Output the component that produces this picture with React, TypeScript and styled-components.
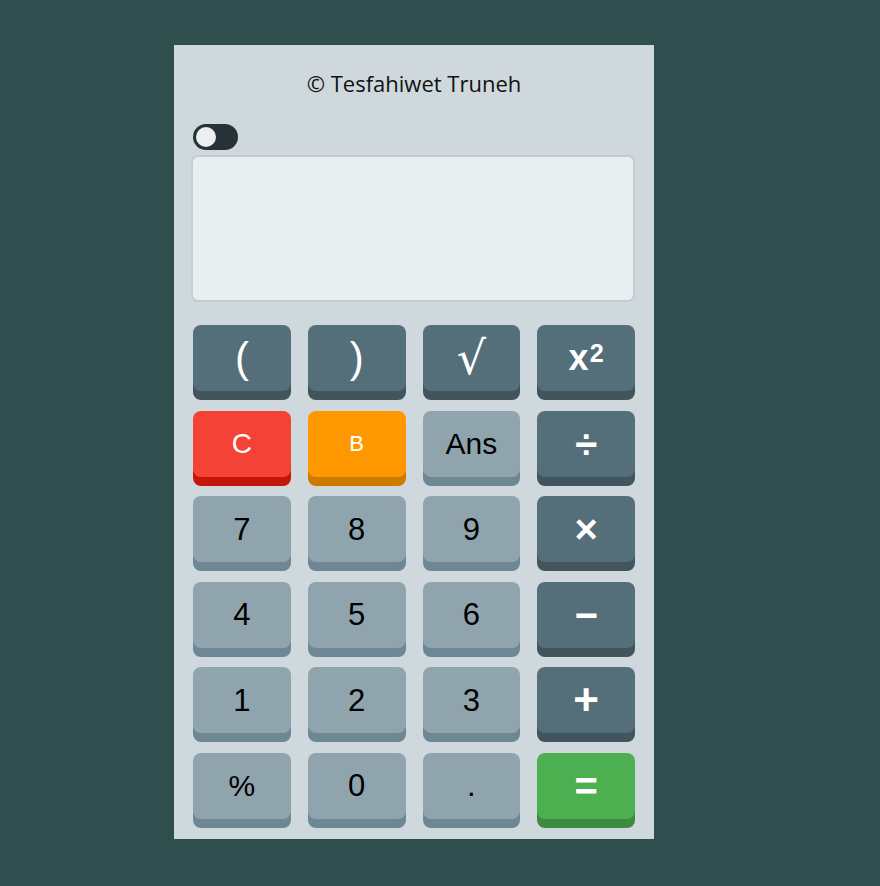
import React from "react";
import styled, { createGlobalStyle } from "styled-components";

const Global = createGlobalStyle`
  html, body { margin: 0; padding: 0; background: #2f4f4f; }
  body { font-family: "Liberation Sans", Arial, sans-serif; }
`;

const Page = styled.div`
  padding: 45px 0 47px 174px;
`;

const Panel = styled.div`
  width: 480px;
  background: #cfd8dc;
  box-sizing: border-box;
  padding: 0 19px 11px 19px;
  display: flex;
  flex-direction: column;
`;

const Title = styled.h1`
  margin: 0;
  height: 79px;
  display: flex;
  align-items: center;
  justify-content: center;
  font-family: "Open Sans", "Noto Sans", sans-serif;
  font-weight: 400;
  font-size: 22px;
  color: #111;
  padding-bottom: 4px;
  box-sizing: border-box;
`;

const Toggle = styled.div`
  width: 45px;
  height: 26px;
  border-radius: 13px;
  background: #263238;
  position: relative;
  margin-bottom: 5px;
`;

const Knob = styled.span`
  position: absolute;
  left: 3px;
  top: 3px;
  width: 20px;
  height: 20px;
  border-radius: 50%;
  background: #eceff1;
`;

const Display = styled.div`
  margin-left: -2px;
  height: 147px;
  box-sizing: border-box;
  border: 2px solid #c3cdd2;
  border-radius: 7px;
  background: #e9eef1;
  margin-bottom: 23px;
`;

const Keys = styled.div`
  display: grid;
  grid-template-columns: repeat(4, 1fr);
  column-gap: 17px;
  row-gap: 19.6px;
  padding-bottom: 9px;
`;

type Variant = "dark" | "light" | "red" | "orange" | "green";

const palette: Record<Variant, { face: string; shade: string; text: string }> = {
  dark: { face: "#546e7a", shade: "#42555d", text: "#ffffff" },
  light: { face: "#90a4ae", shade: "#6d8794", text: "#000000" },
  red: { face: "#f44336", shade: "#c5160b", text: "#ffffff" },
  orange: { face: "#ff9800", shade: "#cc7a00", text: "#ffffff" },
  green: { face: "#4caf50", shade: "#3d8b40", text: "#ffffff" },
};

const Key = styled.button<{ $v: Variant; $size: number; $bold?: boolean; $font?: string }>`
  height: 66px;
  border: none;
  border-radius: 8px;
  padding: 0;
  background: ${(p) => palette[p.$v].face};
  box-shadow: 0 9px 0 ${(p) => palette[p.$v].shade};
  color: ${(p) => palette[p.$v].text};
  font-family: ${(p) => p.$font ?? `"Liberation Sans", Arial, sans-serif`};
  font-size: ${(p) => p.$size}px;
  font-weight: ${(p) => (p.$bold ? 700 : 400)};
  display: flex;
  align-items: center;
  justify-content: center;
  line-height: 1;
  cursor: pointer;
`;

const Sup = styled.sup`
  font-size: 0.7em;
  line-height: 0;
  position: relative;
  top: -0.2em;
  margin-left: 1px;
`;

type K = { label: React.ReactNode; v: Variant; size: number; bold?: boolean; font?: string };

const keys: K[] = [
  { label: "(", v: "dark", size: 42 },
  { label: ")", v: "dark", size: 42 },
  { label: "√", v: "dark", size: 46, font: `"DejaVu Serif", serif` },
  { label: <>x<Sup>2</Sup></>, v: "dark", size: 36, bold: true },
  { label: "C", v: "red", size: 28 },
  { label: "B", v: "orange", size: 22 },
  { label: "Ans", v: "light", size: 30 },
  { label: "÷", v: "dark", size: 40, bold: true },
  { label: "7", v: "light", size: 31 },
  { label: "8", v: "light", size: 31 },
  { label: "9", v: "light", size: 31 },
  { label: "×", v: "dark", size: 40, bold: true },
  { label: "4", v: "light", size: 31 },
  { label: "5", v: "light", size: 31 },
  { label: "6", v: "light", size: 31 },
  { label: "−", v: "dark", size: 40, bold: true },
  { label: "1", v: "light", size: 31 },
  { label: "2", v: "light", size: 31 },
  { label: "3", v: "light", size: 31 },
  { label: "+", v: "dark", size: 44, bold: true },
  { label: "%", v: "light", size: 30 },
  { label: "0", v: "light", size: 31 },
  { label: ".", v: "light", size: 31 },
  { label: "=", v: "green", size: 40, bold: true },
];

export default function App() {
  return (
    <Page>
      <Global />
      <Panel>
        <Title>© Tesfahiwet Truneh</Title>
        <Toggle>
          <Knob />
        </Toggle>
        <Display />
        <Keys>
          {keys.map((k, i) => (
            <Key key={i} $v={k.v} $size={k.size} $bold={k.bold} $font={k.font}>
              {k.label}
            </Key>
          ))}
        </Keys>
      </Panel>
    </Page>
  );
}
